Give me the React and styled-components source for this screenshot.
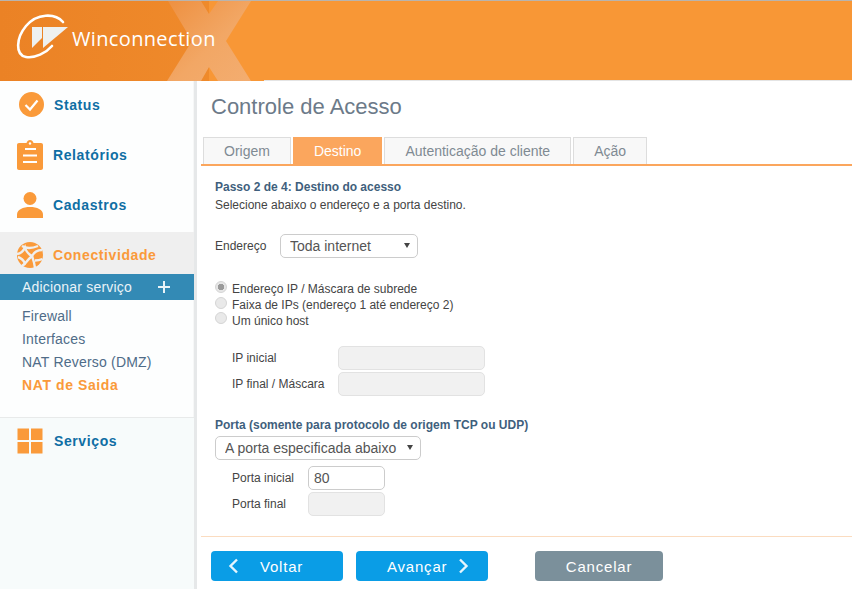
import React from "react";
import styled, { createGlobalStyle } from "styled-components";

const Global = createGlobalStyle`
  html, body { margin: 0; padding: 0; background: #fff; overflow: hidden; }
  body { font-family: "Liberation Sans", Arial, sans-serif; }
  * { box-sizing: border-box; }
`;

const Page = styled.div`
  width: 852px;
  height: 589px;
  display: flex;
  flex-direction: column;
  overflow: hidden;
`;

const Header = styled.header`
  position: relative;
  flex: none;
  height: 81px;
  border-top: 1px solid #b9b4ae;
  background: #f89736;
  display: flex;
  align-items: center;
  padding-left: 17px;
  overflow: hidden;
  &::after {
    content: "";
    position: absolute;
    left: 264px;
    right: 0;
    bottom: 0;
    height: 1px;
    background: #e4e4e4;
  }
`;

const HeaderArt = styled.svg`
  position: absolute;
  left: 0;
  top: 0;
`;

const Brand = styled.div`
  position: relative;
  display: flex;
  align-items: center;
`;

const LogoMark = styled.svg`
  flex: none;
  overflow: visible;
  margin-right: -1px;
  margin-top: -4px;
`;

const BrandName = styled.span`
  font-family: "Open Sans", sans-serif;
  font-size: 20px;
  color: #fff;
  letter-spacing: 0.35px;
  padding-bottom: 5px;
`;

const Body = styled.div`
  flex: 1;
  display: flex;
  min-height: 0;
`;

const Sidebar = styled.nav`
  flex: none;
  width: 197px;
  display: flex;
  flex-direction: column;
  background: #fdfefe;
  border-right: 3px solid #e6e8e9;
  box-shadow: inset -1px 0 0 #f6f7f7;
`;

const NavItem = styled.div`
  display: flex;
  align-items: center;
  flex: none;
  height: ${(p) => p.$height || 50}px;
  padding-left: 17px;
  padding-top: ${(p) => (p.$active ? 4 : 0)}px;
  padding-bottom: ${(p) => p.$lift || 0}px;
  margin-top: ${(p) => p.$offset || 0}px;
  background: ${(p) => (p.$active ? "#efefef" : "transparent")};
  font-size: 14px;
  font-weight: 700;
  letter-spacing: 0.6px;
  color: ${(p) => (p.$active ? "#fa9a3a" : "#0f6ea4")};
`;

const IconSlot = styled.span`
  display: flex;
  width: ${(p) => p.$width || 26}px;
  height: 30px;
  align-items: center;
  justify-content: center;
  margin-left: ${(p) => p.$left || 0}px;
  margin-right: ${(p) => p.$gap || 10}px;
`;

const AddBar = styled.div`
  flex: none;
  height: 26px;
  background: #338ab5;
  display: flex;
  align-items: center;
  justify-content: space-between;
  padding: 0 24px 0 22px;
  font-size: 14px;
  letter-spacing: 0.2px;
  color: #e9f3f8;
`;

const SubList = styled.div`
  padding-top: 5px;
  padding-left: 22px;
  flex: none;
`;

const SubItem = styled.div`
  height: 23px;
  line-height: 23px;
  font-size: 14px;
  letter-spacing: ${(p) => (p.$active ? "0.6px" : "0.2px")};
  font-weight: ${(p) => (p.$active ? 700 : 400)};
  color: ${(p) => (p.$active ? "#fa9a3a" : "#4f6c88")};
`;

const BottomSection = styled.div`
  flex: 1;
  margin-top: 20px;
  border-top: 1px solid #e8eaea;
  background: #f7fbfb;
`;

const Main = styled.main`
  flex: 1;
  min-width: 0;
  display: flex;
  flex-direction: column;
  background: #fff;
`;

const Title = styled.h1`
  margin: 0;
  height: 56px;
  padding: 13px 0 0 14px;
  font-size: 22px;
  line-height: 26px;
  font-weight: 400;
  color: #6c7a89;
`;

const Tabs = styled.div`
  display: flex;
  gap: 2px;
  height: 29px;
  margin-left: 4px;
  padding-left: 2px;
  border-bottom: 2px solid #fba65d;
`;

const Tab = styled.div`
  height: 27px;
  padding: 0 20px;
  line-height: 27px;
  font-size: 14px;
  border: 1px solid ${(p) => (p.$active ? "#fba65d" : "#ddd")};
  border-bottom: 0;
  background: ${(p) => (p.$active ? "#fba65d" : "#f8f8f8")};
  color: ${(p) => (p.$active ? "#fff" : "#7f8a93")};
`;

const Content = styled.div`
  padding: 12px 0 0 18px;
  font-size: 12px;
  color: #444;
`;

const Heading = styled.div`
  line-height: 18px;
  font-weight: 700;
  color: #3f5f7d;
  margin-top: ${(p) => p.$top || 0}px;
`;

const Hint = styled.div`
  line-height: 18px;
  color: #444;
`;

const AddressRow = styled.div`
  display: flex;
  align-items: center;
  margin-top: 20px;
`;

const AddressLabel = styled.label`
  width: 65px;
`;

const SelectWrap = styled.div`
  position: relative;
  width: ${(p) => p.$width}px;
  height: 24px;
  margin-top: ${(p) => p.$top || 0}px;
  &::after {
    content: "";
    position: absolute;
    right: 8px;
    top: 9px;
    border-left: 3px solid transparent;
    border-right: 3px solid transparent;
    border-top: 5px solid #444;
  }
`;

const Select = styled.select`
  appearance: none;
  width: 100%;
  height: 100%;
  padding: 0 0 0 9px;
  border: 1px solid #ccc;
  border-radius: 5px;
  background: #fff;
  font-family: "Liberation Sans", Arial, sans-serif;
  font-size: 14px;
  color: #555;
`;

const RadioGroup = styled.div`
  margin-top: 23px;
`;

const RadioRow = styled.label`
  display: flex;
  align-items: center;
  height: 16px;
  line-height: 16px;
  color: #444;
`;

const Radio = styled.input.attrs({ type: "radio", disabled: true, readOnly: true })`
  appearance: none;
  flex: none;
  width: 12px;
  height: 12px;
  margin: -${(p) => p.$up || 4}px 5px 0 0;
  border-radius: 50%;
  border: 1px solid #d5d5d5;
  background: ${(p) =>
    p.checked
      ? "radial-gradient(circle, #9a9a9a 0 3px, #e6e6e6 3.5px)"
      : "#e9e9e9"};
`;

const Fields = styled.div`
  margin-top: ${(p) => p.$top || 0}px;
  padding-left: 17px;
  display: flex;
  flex-direction: column;
  gap: 2px;
`;

const FieldRow = styled.div`
  display: flex;
  align-items: center;
  height: 24px;
`;

const FieldLabel = styled.label`
  width: ${(p) => p.$width}px;
  flex: none;
`;

const Input = styled.input`
  width: ${(p) => p.$width}px;
  height: 24px;
  padding: 0 5px;
  border: 1px solid ${(p) => (p.disabled ? "#e2e2e2" : "#ccc")};
  border-radius: 5px;
  background: ${(p) => (p.disabled ? "#f1f1f1" : "#fff")};
  font-family: "Liberation Sans", Arial, sans-serif;
  font-size: 14px;
  color: #555;
`;

const Footer = styled.div`
  margin: 20px 0 0 4px;
  border-top: 1px solid #fbdcc0;
  padding: 14px 0 0 10px;
  display: flex;
`;

const Button = styled.button`
  width: ${(p) => p.$width || 132}px;
  height: 30px;
  margin-left: ${(p) => p.$left || 0}px;
  border: 0;
  border-radius: 4px;
  background: ${(p) => (p.$muted ? "#7b909b" : "#0a9de6")};
  color: #fff;
  font-family: "Liberation Sans", Arial, sans-serif;
  font-size: 15px;
  letter-spacing: 0.8px;
  display: flex;
  align-items: center;
  justify-content: ${(p) => (p.$pad ? "flex-start" : "center")};
  gap: ${(p) => p.$gap || 0}px;
  padding: 0 0 0 ${(p) => p.$pad || 0}px;
`;

const Chevron = ({ dir }) => (
  <svg width="11" height="16" viewBox="0 0 11 16" fill="none" stroke="#e6f5fd" strokeWidth="2.4">
    <path d={dir === "left" ? "M9 1.5 L2.5 8 L9 14.5" : "M2 1.5 L8.5 8 L2 14.5"} />
  </svg>
);

const Art = () => (
  <HeaderArt width="852" height="81" viewBox="0 0 852 81">
    <defs>
      <linearGradient id="hdr" x1="0" x2="1" y1="0" y2="0">
        <stop offset="0" stopColor="#eb8225" />
        <stop offset="1" stopColor="#ef8a2b" />
      </linearGradient>
      <linearGradient id="xg" x1="0" x2="1" y1="0" y2="1">
        <stop offset="0" stopColor="#ee9040" />
        <stop offset="0.55" stopColor="#f2a765" />
        <stop offset="1" stopColor="#f3ad70" />
      </linearGradient>
    </defs>
    <path d="M0 0H209V14L192 41L209 67V81H0Z" fill="url(#hdr)" />
    <path d="M168 0H201L209 13L218 0H251L226 40L251 80H218L209 66L201 80H167L192 40Z" fill="url(#xg)" />
  </HeaderArt>
);

const Logo = () => (
  <LogoMark width="56" height="50" viewBox="0 0 56 50">
    <path d="M46 8 C38 -1 20 -1 9 12 C-1 24 -2 41 9 43 C18 44.5 29 39 35 32" fill="none" stroke="#fff" strokeWidth="2.6" strokeLinecap="round" />
    <path d="M15 13H25V24L15 34Z" fill="#eef0f0" />
    <path d="M26 13H51L26 34Z" fill="#eef0f0" />
  </LogoMark>
);

const orange = "#fa9a3a";

const StatusIcon = () => (
  <svg width="25" height="25" viewBox="0 0 25 25">
    <circle cx="12.5" cy="12.5" r="12.5" fill={orange} />
    <path d="M6.5 13 L11 17.5 L18.5 8.5" fill="none" stroke="#fff" strokeWidth="2.2" />
  </svg>
);

const ReportIcon = () => (
  <svg width="26" height="30" viewBox="0 0 26 30">
    <path d="M2 3H9.5C10 1 11.5 0 13 0S16 1 16.5 3H24C25.2 3 26 3.8 26 5V28C26 29.2 25.2 30 24 30H2C.8 30 0 29.2 0 28V5C0 3.8 .8 3 2 3Z" fill={orange} />
    <circle cx="13" cy="3.5" r="1.2" fill="#fff" />
    <path d="M8 9H19M6 15.5H20M6 22H20" stroke="#fff" strokeWidth="2.2" fill="none" />
  </svg>
);

const PersonIcon = () => (
  <svg width="26" height="26" viewBox="0 0 26 26">
    <circle cx="13" cy="6.5" r="6.5" fill={orange} />
    <path d="M0 26V22.5C0 17.5 6 15 13 15S26 17.5 26 22.5V26Z" fill={orange} />
  </svg>
);

const GlobeIcon = () => (
  <svg width="26" height="26" viewBox="0 0 26 26">
    <circle cx="13" cy="13" r="13" fill={orange} />
    <g fill="none" stroke="#efefef" strokeWidth="2.4">
      <path d="M5 4 C9 6.5 15 6.5 21 4" />
      <path d="M0 12 C3.5 11.5 6 10 8 5.5 C9 9 11 12 15 14" />
      <path d="M15 14 C17 10 20 8 25 8" />
      <path d="M1 15 C4 16 6.5 18 8 21.5 C10 19 12 16.5 15 14 C16 17 17 19 18 26" />
      <path d="M5 24 L8 21.5 M18 18.5 C20 18.5 23 18 25.5 17" />
    </g>
  </svg>
);

const GridIcon = () => (
  <svg width="26" height="26" viewBox="0 0 26 26">
    <path d="M0.5 0.5H12V12H0.5ZM14 0.5H25.5V12H14ZM0.5 14H12V25.5H0.5ZM14 14H25.5V25.5H14Z" fill={orange} />
  </svg>
);

const Plus = () => (
  <svg width="12" height="12" viewBox="0 0 12 12">
    <path d="M6 0V12M0 6H12" stroke="#e9f3f8" strokeWidth="2" />
  </svg>
);

export default function App() {
  return (
    <Page>
      <Global />
      <Header>
        <Art />
        <Brand>
          <Logo />
          <BrandName>Winconnection</BrandName>
        </Brand>
      </Header>
      <Body>
        <Sidebar>
          <NavItem $height={49} $lift={2}>
            <IconSlot $left={2} $width={25}><StatusIcon /></IconSlot>Status
          </NavItem>
          <NavItem>
            <IconSlot><ReportIcon /></IconSlot>Relatórios
          </NavItem>
          <NavItem>
            <IconSlot><PersonIcon /></IconSlot>Cadastros
          </NavItem>
          <NavItem $active $height={42} $offset={2}>
            <IconSlot><GlobeIcon /></IconSlot>Conectividade
          </NavItem>
          <AddBar>
            Adicionar serviço
            <Plus />
          </AddBar>
          <SubList>
            <SubItem>Firewall</SubItem>
            <SubItem>Interfaces</SubItem>
            <SubItem>NAT Reverso (DMZ)</SubItem>
            <SubItem $active>NAT de Saida</SubItem>
          </SubList>
          <BottomSection>
            <NavItem $height={46}>
              <IconSlot $gap={11}><GridIcon /></IconSlot>Serviços
            </NavItem>
          </BottomSection>
        </Sidebar>
        <Main>
          <Title>Controle de Acesso</Title>
          <Tabs>
            <Tab>Origem</Tab>
            <Tab $active>Destino</Tab>
            <Tab>Autenticação de cliente</Tab>
            <Tab>Ação</Tab>
          </Tabs>
          <Content>
            <Heading>Passo 2 de 4: Destino do acesso</Heading>
            <Hint>Selecione abaixo o endereço e a porta destino.</Hint>
            <AddressRow>
              <AddressLabel>Endereço</AddressLabel>
              <SelectWrap $width={138}>
                <Select defaultValue="Toda internet">
                  <option>Toda internet</option>
                </Select>
              </SelectWrap>
            </AddressRow>
            <RadioGroup>
              <RadioRow><Radio name="dest" checked />Endereço IP / Máscara de subrede</RadioRow>
              <RadioRow><Radio name="dest" />Faixa de IPs (endereço 1 até endereço 2)</RadioRow>
              <RadioRow><Radio name="dest" $up={6} />Um único host</RadioRow>
            </RadioGroup>
            <Fields $top={17}>
              <FieldRow>
                <FieldLabel $width={106}>IP inicial</FieldLabel>
                <Input $width={147} disabled />
              </FieldRow>
              <FieldRow>
                <FieldLabel $width={106}>IP final / Máscara</FieldLabel>
                <Input $width={147} disabled />
              </FieldRow>
            </Fields>
            <Heading $top={20}>Porta (somente para protocolo de origem TCP ou UDP)</Heading>
            <SelectWrap $width={206} $top={2}>
              <Select defaultValue="A porta especificada abaixo">
                <option>A porta especificada abaixo</option>
              </Select>
            </SelectWrap>
            <Fields $top={6}>
              <FieldRow>
                <FieldLabel $width={76}>Porta inicial</FieldLabel>
                <Input $width={77} defaultValue="80" />
              </FieldRow>
              <FieldRow>
                <FieldLabel $width={76}>Porta final</FieldLabel>
                <Input $width={77} disabled />
              </FieldRow>
            </Fields>
          </Content>
          <Footer>
            <Button $pad={17} $gap={21}><Chevron dir="left" />Voltar</Button>
            <Button $left={13} $pad={31} $gap={11}>Avançar<Chevron dir="right" /></Button>
            <Button $left={47} $width={128} $muted>Cancelar</Button>
          </Footer>
        </Main>
      </Body>
    </Page>
  );
}
